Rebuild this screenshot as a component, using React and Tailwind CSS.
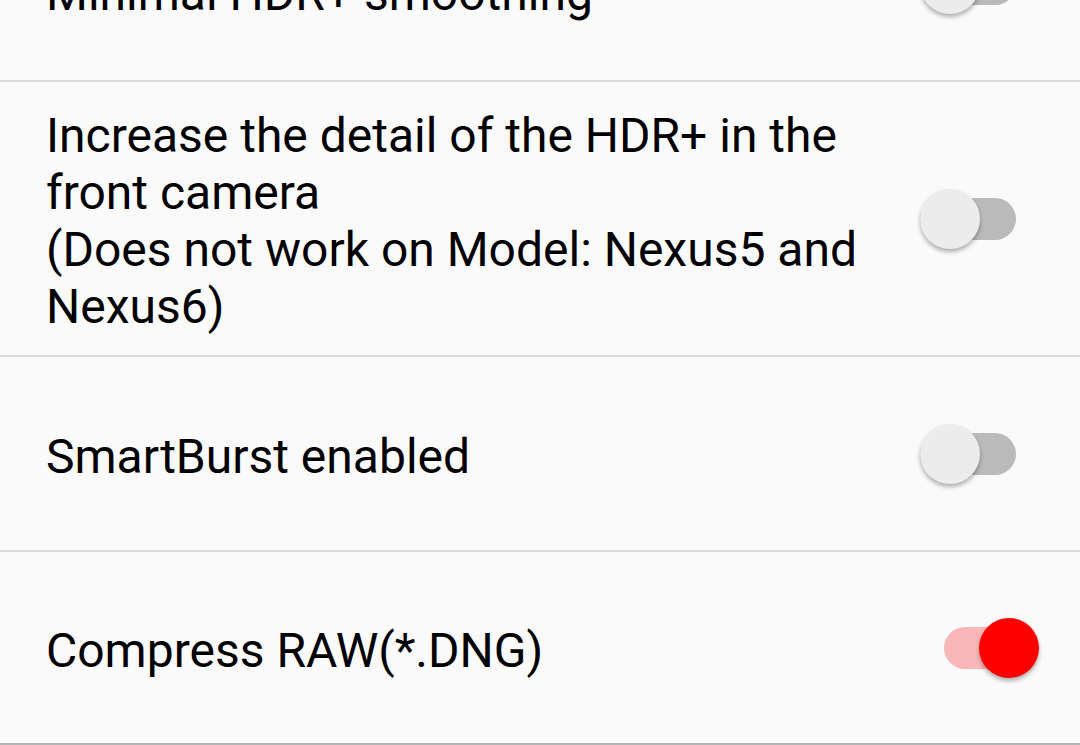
const Switch = ({ on }) => {
  if (on) {
    return (
      <div className="flex h-[62px] w-[96px] items-center">
        <div className="flex h-[42px] w-[90px] items-center justify-end rounded-full bg-[#fbb7b7]">
          <div className="-mr-[6px] h-[60px] w-[60px] rounded-full bg-[#ff0000] shadow-[0_3px_4px_rgba(0,0,0,0.3)]" />
        </div>
      </div>
    );
  }
  return (
    <div className="flex h-[62px] w-[96px] items-center">
      <div className="flex h-[42px] w-[96px] items-center rounded-full bg-[#bababa]">
        <div className="h-[60px] w-[60px] rounded-full bg-[#ececec] shadow-[0_3px_4px_rgba(0,0,0,0.3)]" />
      </div>
    </div>
  );
};

const Row = ({ lines, on, height, extra = "", textClass = "pt-[5px]" }) => (
  <div
    className={`flex items-center justify-between border-b-2 border-[#dcdcdc] pl-[46px] ${extra}`}
    style={{ height }}
  >
    <div className={`text-[48px] leading-[57px] text-black ${textClass}`}>
      {lines.map((l) => (
        <div key={l} className="whitespace-nowrap">
          {l}
        </div>
      ))}
    </div>
    <div className="mr-[64px]">
      <Switch on={on} />
    </div>
  </div>
);

export default function App() {
  return (
    <div
      className="h-[745px] w-[1080px] overflow-hidden bg-[#fafafa]"
      style={{ fontFamily: "Roboto, 'Noto Sans', sans-serif" }}
    >
      <Row
        lines={["Minimal HDR+ smoothing"]}
        height="195px"
        extra="-mt-[113px]"
        textClass="pt-[20px]"
      />
      <Row
        lines={[
          "Increase the detail of the HDR+ in the",
          "front camera",
          "(Does not work on Model: Nexus5 and",
          "Nexus6)",
        ]}
        height="275px"
      />
      <Row lines={["SmartBurst enabled"]} height="195px" />
      <div className="flex h-[193px] items-center justify-between border-b-2 border-[#b5b5b5] pl-[46px]">
        <div className="pt-[5px] text-[48px] leading-[57px] text-black">
          Compress RAW(*.DNG)
        </div>
        <div className="mr-[46px]">
          <div className="flex h-[62px] items-center">
            <div className="flex h-[42px] w-[90px] items-center justify-end rounded-full bg-[#fbb7b7]">
              <div className="-mr-[5px] h-[60px] w-[60px] rounded-full bg-[#ff0000] shadow-[0_3px_4px_rgba(0,0,0,0.3)]" />
            </div>
          </div>
        </div>
      </div>
    </div>
  );
}
